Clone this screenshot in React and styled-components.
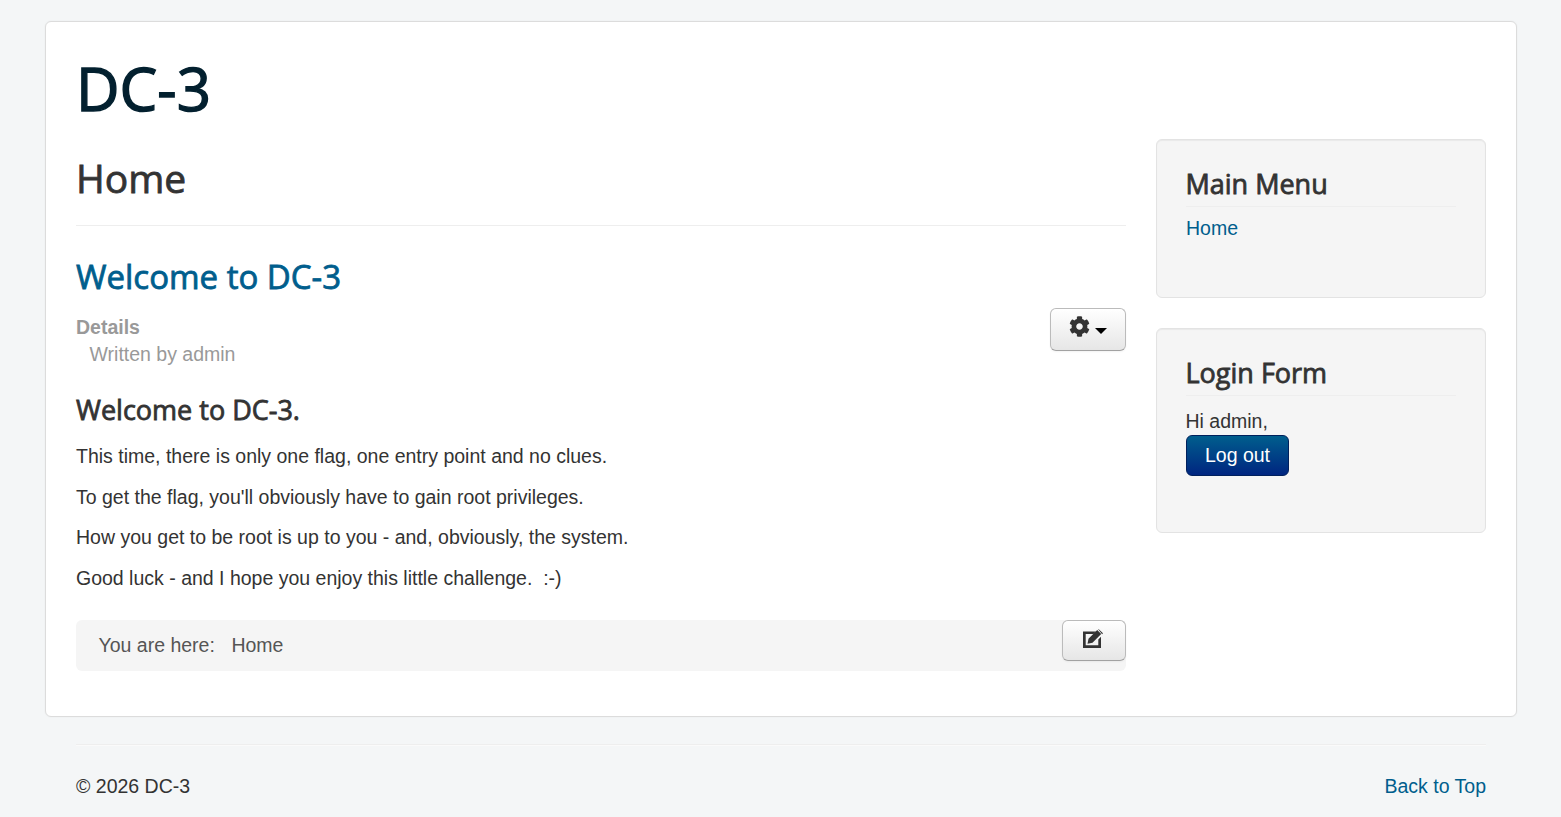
import React from 'react';
import styled, { createGlobalStyle } from 'styled-components';
import { FaCog } from 'react-icons/fa';

const GlobalStyle = createGlobalStyle`
  html, body {
    margin: 0;
    padding: 0;
    background: #f4f6f7;
  }
  body {
    font-family: "Liberation Sans", Arial, sans-serif;
    font-size: 19.5px;
    line-height: 27px;
    color: #333333;
  }
  * {
    box-sizing: border-box;
  }
`;

const Page = styled.div`
  padding-top: 21px;
  height: 817px;
  overflow: hidden;
`;

const Card = styled.div`
  width: 1472px;
  height: 696px;
  margin-left: 45px;
  padding: 30px;
  background: #fff;
  border: 1px solid #dcdcdc;
  border-radius: 6px;
  box-shadow: 0 0 2px rgba(0, 0, 0, 0.05);
`;

const Brand = styled.div`
  font-family: "Open Sans", sans-serif;
  font-size: 60px;
  line-height: 73px;
  height: 75px;
  font-weight: 400;
  -webkit-text-stroke: 1.4px #03202f;
  color: #03202f;
`;

const Columns = styled.div`
  display: flex;
  gap: 30px;
  margin-top: 12px;
`;

const Main = styled.main`
  width: 1050px;
`;

const Aside = styled.aside`
  width: 330px;
  display: flex;
  flex-direction: column;
  gap: 30px;
`;

const PageHeader = styled.div`
  height: 87px;
  border-bottom: 1px solid #eeeeee;
`;

const PageTitle = styled.h1`
  margin: 0;
  padding-top: 12px;
  font-family: "Open Sans", sans-serif;
  font-size: 39px;
  line-height: 54px;
  font-weight: 400;
  -webkit-text-stroke: 0.8px #333;
  color: #333;
`;

const ArticleTitle = styled.h2`
  margin: 29px 0 0;
  font-family: "Open Sans", sans-serif;
  font-size: 33px;
  line-height: 44px;
  font-weight: 400;
  -webkit-text-stroke: 0.8px #005e8d;
  color: #005e8d;
`;

const MetaRow = styled.div`
  position: relative;
  margin-top: 15px;
`;

const Details = styled.dl`
  margin: 0;
  height: 54px;
  color: #999999;
`;

const DetailsTitle = styled.dt`
  font-weight: 700;
`;

const DetailsItem = styled.dd`
  margin: 0 0 0 13.5px;
`;

const IconButton = styled.button`
  position: absolute;
  top: ${(p) => p.$top}px;
  right: 0;
  width: ${(p) => p.$width}px;
  height: ${(p) => p.$height}px;
  display: flex;
  align-items: center;
  justify-content: center;
  gap: 5px;
  padding: 0;
  color: #333;
  background: linear-gradient(#ffffff, #e6e6e6);
  border: 1px solid #bbbbbb;
  border-bottom-color: #a2a2a2;
  border-radius: 6px;
  box-shadow: inset 0 1px 0 rgba(255, 255, 255, 0.2), 0 1px 2px rgba(0, 0, 0, 0.05);
`;

const CogIcon = styled(FaCog)`
  width: 21px;
  height: 21px;
  margin-bottom: 7px;
  color: #333;
`;

const EditIcon = styled.svg`
  width: 20px;
  height: 20px;
  margin: 0 3px 3px 0;
  fill: #333;
`;

const Caret = styled.span`
  width: 0;
  height: 0;
  margin-top: 2px;
  border-top: 6px solid #000;
  border-left: 6px solid transparent;
  border-right: 6px solid transparent;
`;

const BodyTitle = styled.h3`
  margin: 24px 0 0;
  font-family: "Open Sans", sans-serif;
  font-size: 27px;
  line-height: 36px;
  font-weight: 400;
  -webkit-text-stroke: 0.8px #333;
  color: #333;
`;

const Para = styled.p`
  margin: 0 0 13.5px;
  white-space: pre-wrap;
`;

const Body = styled.div`
  margin-top: 15px;
`;

const Breadcrumb = styled.div`
  position: relative;
  height: 51px;
  margin-top: 28px;
  padding: 12px 22.5px;
  background: #f5f5f5;
  border-radius: 6px;
  color: #555;
`;

const Crumb = styled.span`
  margin-right: ${(p) => p.$gap || 0}px;
`;

const Well = styled.section`
  height: ${(p) => p.$height}px;
  padding: 29px;
  text-indent: -0.5px;
  background: #f5f5f5;
  border: 1px solid #e3e3e3;
  border-radius: 6px;
  box-shadow: inset 0 1px 1px rgba(0, 0, 0, 0.05);
`;

const WellTitle = styled.h3`
  margin: 0 0 8px;
  height: 38px;
  font-family: "Open Sans", sans-serif;
  font-size: 27px;
  line-height: 30px;
  font-weight: 400;
  -webkit-text-stroke: 0.8px #333;
  color: #333;
  border-bottom: 1px solid #eeeeee;
`;

const Greeting = styled.div`
  margin-top: 12px;
`;

const Link = styled.a`
  color: #005e8d;
  text-decoration: none;
`;

const PrimaryButton = styled.button`
  display: block;
  width: 103px;
  height: 41px;
  padding: 0;
  font: inherit;
  color: #fff;
  background: linear-gradient(#005e8d, #002580);
  border: 1px solid #00205c;
  border-radius: 6px;
`;

const Footer = styled.footer`
  width: 1410px;
  margin: 27px 0 0 76px;
  padding-top: 28px;
  display: flex;
  justify-content: space-between;
  border-top: 1px solid #eeeeee;
  box-shadow: inset 0 1px 0 #fafafa;
`;

const Edit = () => (
  <EditIcon viewBox="0 0 20 20" aria-hidden="true">
    <path d="M0 2.500h13l-2.500 2.500H2.700v11.300h12.600v-5.800l2.700-2.700V19H0z" />
    <path d="M4.500 14.800l1-5 8.700-8.700 4 4-8.700 8.700zM15.200.2L15.500 0l4.500 4.300-.9 .9z" />
  </EditIcon>
);

const App = () => (
  <Page>
    <GlobalStyle />
    <Card>
      <Brand>DC-3</Brand>
      <Columns>
        <Main>
          <PageHeader>
            <PageTitle>Home</PageTitle>
          </PageHeader>
          <ArticleTitle>
            <Link href="#">Welcome to DC-3</Link>
          </ArticleTitle>
          <MetaRow>
            <IconButton $top={-6} $width={76} $height={43} aria-label="Actions">
              <CogIcon />
              <Caret />
            </IconButton>
            <Details>
              <DetailsTitle>Details</DetailsTitle>
              <DetailsItem>Written by admin</DetailsItem>
            </Details>
          </MetaRow>
          <BodyTitle>Welcome to DC-3.</BodyTitle>
          <Body>
            <Para>This time, there is only one flag, one entry point and no clues.</Para>
            <Para>To get the flag, you'll obviously have to gain root privileges.</Para>
            <Para>How you get to be root is up to you - and, obviously, the system.</Para>
            <Para>{'Good luck - and I hope you enjoy this little challenge.  :-)'}</Para>
          </Body>
          <Breadcrumb>
            <IconButton $top={0} $width={64} $height={41} aria-label="Edit">
              <Edit />
            </IconButton>
            <Crumb $gap={16.5}>You are here:</Crumb>
            <Crumb>Home</Crumb>
          </Breadcrumb>
        </Main>
        <Aside>
          <Well $height={159}>
            <WellTitle>Main Menu</WellTitle>
            <Link href="#">Home</Link>
          </Well>
          <Well $height={205}>
            <WellTitle>Login Form</WellTitle>
            <Greeting>Hi admin,</Greeting>
            <PrimaryButton>Log out</PrimaryButton>
          </Well>
        </Aside>
      </Columns>
    </Card>
    <Footer>
      <span>© 2026 DC-3</span>
      <Link href="#">Back to Top</Link>
    </Footer>
  </Page>
);

export default App;
